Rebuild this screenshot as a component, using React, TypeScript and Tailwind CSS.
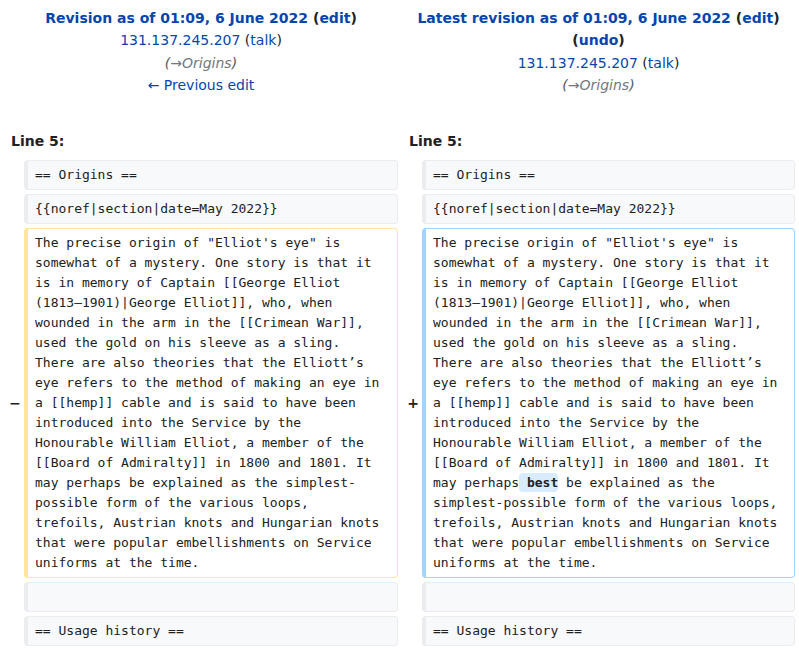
const before =
  "The precise origin of \"Elliot's eye\" is somewhat of a mystery. One story is that it is in memory of Captain [[George Elliot (1813–1901)|George Elliot]], who, when wounded in the arm in the [[Crimean War]], used the gold on his sleeve as a sling. There are also theories that the Elliott’s eye refers to the method of making an eye in a [[hemp]] cable and is said to have been introduced into the Service by the Honourable William Elliot, a member of the [[Board of Admiralty]] in 1800 and 1801. It may perhaps";
const after =
  " be explained as the simplest-possible form of the various loops, trefoils, Austrian knots and Hungarian knots that were popular embellishments on Service uniforms at the time.";

const link = "text-[#0645ad]";

function Context({ text }: { text: string }) {
  return (
    <div className="min-h-[30px] rounded-[4px] border border-l-4 border-[#eaecf0] bg-[#f8f9fa] pl-[7px] pr-[12px] py-1 font-['DejaVu_Sans_Mono',monospace] text-[13px] leading-[20px] whitespace-pre-wrap break-words">
      {text}
    </div>
  );
}

function Marker({ sign }: { sign?: string }) {
  return (
    <div className="flex items-center justify-end pr-[3px] text-sm font-bold">{sign}</div>
  );
}

export default function App() {
  return (
    <div className="w-[799px] h-[650px] overflow-hidden bg-white text-[#202122] font-['DejaVu_Sans',sans-serif] text-sm">
      {/* revision headers */}
      <div className="flex pt-[7px] leading-[22.4px]">
        <div className="w-[398px] pl-1 text-center">
          <div className="font-bold">
            <a className={link}>Revision as of 01:09, 6 June 2022</a> (<a className={link}>edit</a>)
          </div>
          <div>
            <a className={link}>131.137.245.207</a> (<a className={link}>talk</a>)
          </div>
          <div className="italic text-[#54595d]">
            (<span className="text-[#72777d]">→Origins</span>)
          </div>
          <div>
            <a className={link}>← Previous edit</a>
          </div>
        </div>
        <div className="w-[397px] pl-1 text-center">
          <div className="font-bold">
            <a className={link}>Latest revision as of 01:09, 6 June 2022</a> (<a className={link}>edit</a>){" "}
            (<a className={link}>undo</a>)
          </div>
          <div>
            <a className={link}>131.137.245.207</a> (<a className={link}>talk</a>)
          </div>
          <div className="italic text-[#54595d]">
            (<span className="text-[#72777d]">→Origins</span>)
          </div>
        </div>
      </div>

      {/* line numbers */}
      <div className="mt-[33px] flex h-[30px] leading-[22.4px] font-bold">
        <div className="w-[398px] pl-[11px]">Line 5:</div>
        <div className="w-[397px] pl-[11px]">Line 5:</div>
      </div>

      {/* diff rows */}
      <div className="grid grid-cols-[24px_374px_24px_373px] gap-y-1">
        <Marker />
        <Context text="== Origins ==" />
        <Marker />
        <Context text="== Origins ==" />

        <Marker />
        <Context text="{{noref|section|date=May 2022}}" />
        <Marker />
        <Context text="{{noref|section|date=May 2022}}" />

        <Marker sign="−" />
        <div className="rounded-[4px] border border-l-4 border-[#ffe49c] bg-white pl-[7px] pr-[12px] py-1 font-['DejaVu_Sans_Mono',monospace] text-[13px] leading-[20px] whitespace-pre-wrap break-words">
          {before}
          {after}
        </div>
        <Marker sign="+" />
        <div className="rounded-[4px] border border-l-4 border-[#a3d3ff] bg-white pl-[7px] pr-[12px] py-1 font-['DejaVu_Sans_Mono',monospace] text-[13px] leading-[20px] whitespace-pre-wrap break-words">
          {before}
          <ins className="rounded-[4px] bg-[#d8ecff] py-[2px] font-bold no-underline">{" best"}</ins>
          {after}
        </div>

        <Marker />
        <Context text="" />
        <Marker />
        <Context text="" />

        <Marker />
        <Context text="== Usage history ==" />
        <Marker />
        <Context text="== Usage history ==" />
      </div>
    </div>
  );
}
